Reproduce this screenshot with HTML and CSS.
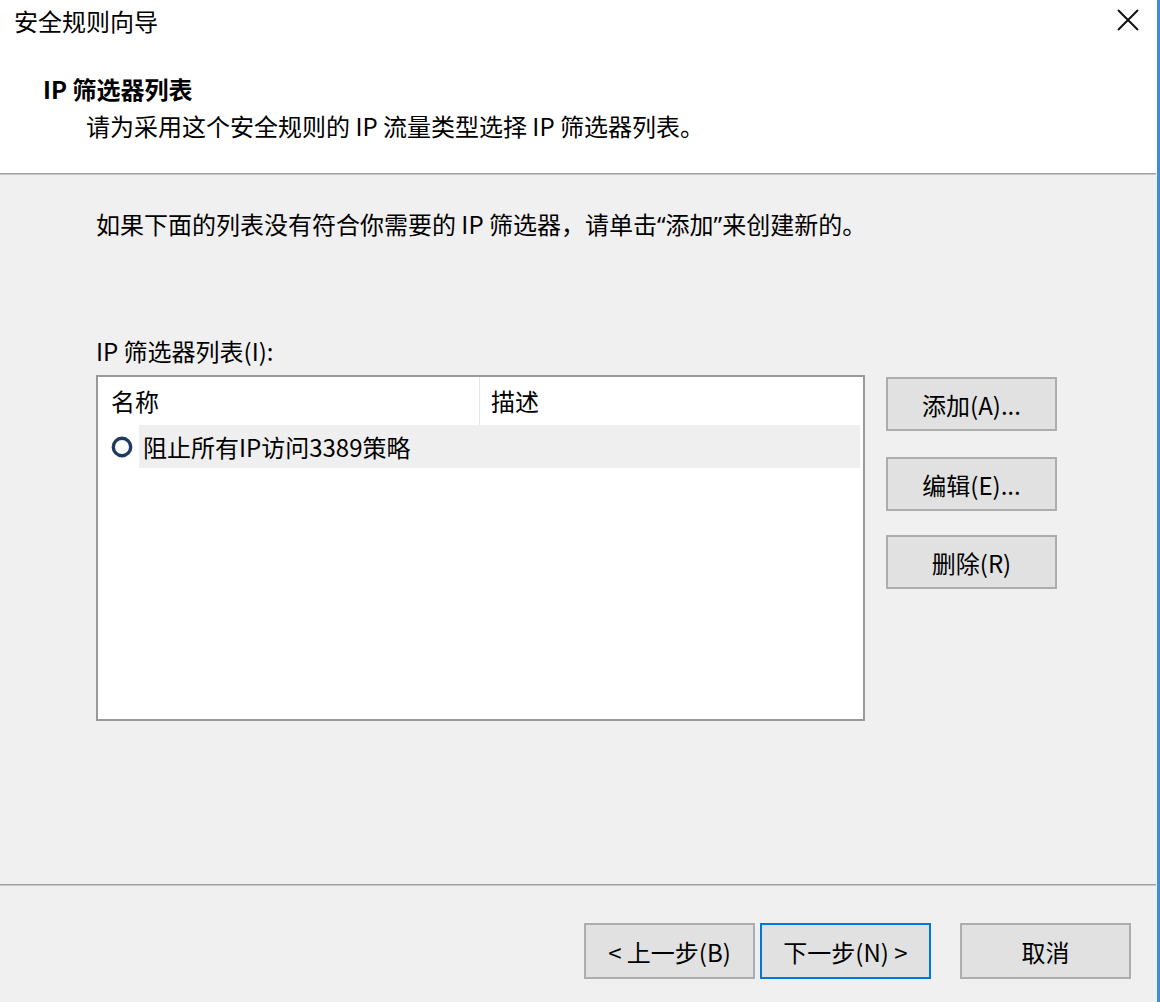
FILE: index.html
```html
<!DOCTYPE html>
<html lang="zh-CN">
<head>
<meta charset="utf-8">
<title>安全规则向导</title>
<link rel="stylesheet" href="styles.css">
</head>
<body>
<div class="window">
  <div class="header">
    <div class="titlebar">
      <span class="title">安全规则向导</span>
      <svg class="close" width="22" height="22" viewBox="0 0 22 22"><path d="M1 1 L21 21 M21 1 L1 21" stroke="#111" stroke-width="2" fill="none"/></svg>
    </div>
    <div class="heading">IP 筛选器列表</div>
    <div class="subheading">请为采用这个安全规则的 IP 流量类型选择 IP 筛选器列表。</div>
  </div>
  <div class="sep"></div>
  <div class="main">
    <div class="intro">如果下面的列表没有符合你需要的 IP 筛选器，请单击<span class="q">“</span>添加<span class="q">”</span>来创建新的。</div>
    <div class="label">IP 筛选器列表(I):</div>
    <div class="listrow">
      <div class="listbox">
        <div class="lv-head">
          <div class="col col-name">名称</div>
          <div class="col col-desc">描述</div>
        </div>
        <div class="lv-row">
          <svg class="ring" width="22" height="22" viewBox="0 0 22 22"><circle cx="11" cy="11" r="8.7" stroke="#1c3b63" stroke-width="3.4" fill="none"/></svg>
          <div class="item">阻止所有IP访问3389策略</div>
        </div>
      </div>
      <div class="side">
        <div class="btn side-btn first">添加(A)...</div>
        <div class="btn side-btn second">编辑(E)...</div>
        <div class="btn side-btn third">删除(R)</div>
      </div>
    </div>
  </div>
  <div class="sep"></div>
  <div class="footer">
    <div class="btn nav">&lt; 上一步(B)</div>
    <div class="btn nav next">下一步(N) &gt;</div>
    <div class="btn nav cancel">取消</div>
  </div>
</div>
</body>
</html>
```

FILE: styles.css
```css
html, body {
  margin: 0;
  padding: 0;
  width: 1160px;
  height: 1002px;
  overflow: hidden;
  background: #f0f0f0;
}
body {
  font-family: "Noto Sans CJK SC", "Noto Sans", sans-serif;
  font-size: 24px;
  color: #000;
}
.window {
  width: 1157px;
  height: 1002px;
  border-right: 3px solid #3d8fdc;
  display: flex;
  flex-direction: column;
  background: #f0f0f0;
}
.header {
  background: #fff;
  height: 173px;
  display: flex;
  flex-direction: column;
}
.titlebar {
  height: 42px;
  display: flex;
  align-items: center;
  justify-content: space-between;
  padding-left: 14px;
  padding-right: 18px;
}
.title {
  line-height: 30px;
}
.close {
  display: block;
  margin-top: -2px;
}
.heading {
  margin-top: 32px;
  padding-left: 43px;
  line-height: 30px;
  font-weight: bold;
}
.subheading {
  margin-top: 7px;
  padding-left: 86px;
  line-height: 30px;
}
.sep {
  height: 1px;
  background: #a0a0a0;
  border-bottom: 1px solid #c8c8c8;
  margin-right: 1px;
}
.main {
  flex: 1;
  padding: 34px 0 0 96px;
}
.intro {
  line-height: 30px;
}
.q {
  font-family: "Noto Sans", sans-serif;
}
.label {
  margin-top: 96px;
  line-height: 30px;
}
.listrow {
  display: flex;
  margin-top: 9px;
  gap: 21px;
  align-items: flex-start;
}
.listbox {
  width: 769px;
  height: 346px;
  box-sizing: border-box;
  border: 2px solid #9a9a9a;
  background: #fff;
}
.lv-head {
  display: flex;
  height: 48px;
  margin-right: 5px;
}
.col {
  line-height: 48px;
  box-sizing: border-box;
}
.col-name {
  width: 382px;
  padding-left: 13px;
  border-right: 1px solid #e5e5e5;
}
.col-desc {
  flex: 1;
  padding-left: 11px;
}
.lv-row {
  display: flex;
  align-items: center;
  height: 43px;
}
.ring {
  display: block;
  margin-left: 13px;
}
.item {
  flex: 1;
  margin-left: 6px;
  margin-right: 3px;
  height: 43px;
  line-height: 43px;
  padding-left: 4px;
  background: #efefef;
}
.side {
  display: flex;
  flex-direction: column;
  padding-top: 2px;
}
.btn {
  box-sizing: border-box;
  background: #e1e1e1;
  border: 2px solid #adadad;
  display: flex;
  align-items: center;
  justify-content: center;
}
.side-btn {
  width: 171px;
  height: 54px;
}
.second {
  margin-top: 26px;
}
.third {
  margin-top: 24px;
}
.footer {
  height: 116px;
  box-sizing: border-box;
  padding: 37px 26px 0 0;
  display: flex;
  justify-content: flex-end;
  align-items: flex-start;
}
.nav {
  width: 171px;
  height: 56px;
}
.next {
  margin-left: 5px;
  border-color: #0078d7;
}
.cancel {
  margin-left: 29px;
}
```
